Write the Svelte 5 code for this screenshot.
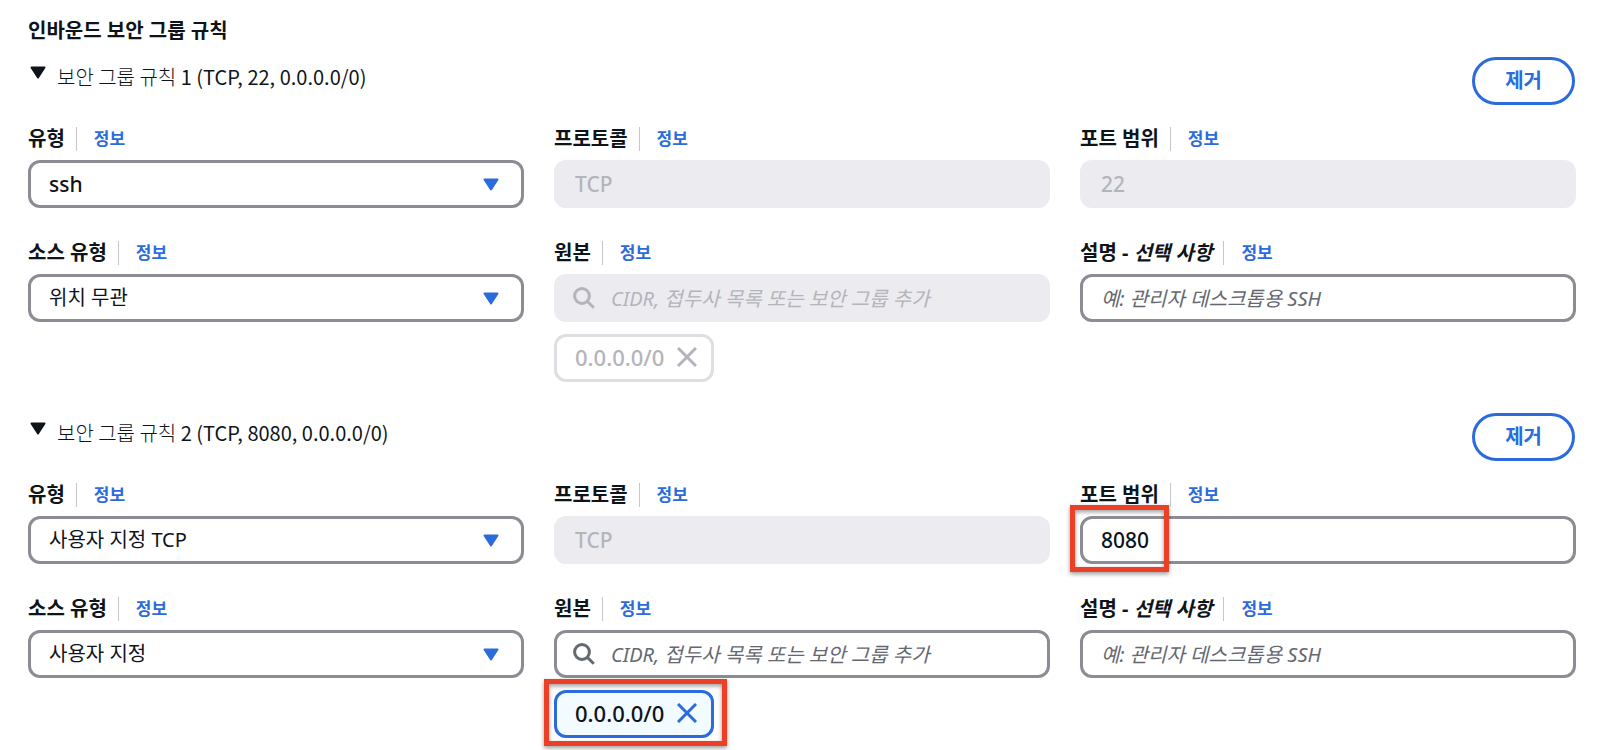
<script lang="ts">
  interface Rule {
    id: number;
    type: string;
    protocol: string;
    port: string;
    portLocked: boolean;
    sourceType: string;
    cidr: string;
    cidrLocked: boolean;
    description: string;
    highlight: boolean;
    open: boolean;
  }

  const types = ['ssh', '사용자 지정 TCP'];
  const sourceTypes = ['위치 무관', '사용자 지정'];

  let rules = $state<Rule[]>([
    {
      id: 1,
      type: 'ssh',
      protocol: 'TCP',
      port: '22',
      portLocked: true,
      sourceType: '위치 무관',
      cidr: '0.0.0.0/0',
      cidrLocked: true,
      description: '',
      highlight: false,
      open: true,
    },
    {
      id: 2,
      type: '사용자 지정 TCP',
      protocol: 'TCP',
      port: '8080',
      portLocked: false,
      sourceType: '사용자 지정',
      cidr: '0.0.0.0/0',
      cidrLocked: false,
      description: '',
      highlight: true,
      open: true,
    },
  ]);

  function remove(id: number) {
    rules = rules.filter((rule) => rule.id !== id);
  }
</script>

{#snippet caret()}
  <svg class="caret" viewBox="0 0 16 13" aria-hidden="true">
    <path d="M1.5 1.5h13L8 11.5z" fill="currentColor" stroke="currentColor" stroke-width="2" stroke-linejoin="round" />
  </svg>
{/snippet}

{#snippet label(id: string, text: string, optional = '')}
  <div class="label-row">
    <label for={id}>{text}{#if optional}{' '}- <em>{optional}</em>{/if}</label>
    <a class="info" href="#info">정보</a>
  </div>
{/snippet}

<main>
  <h2>인바운드 보안 그룹 규칙</h2>

  {#each rules as rule (rule.id)}
    <section class="rule">
      <header>
        <button class="toggle" type="button" aria-expanded={rule.open} onclick={() => (rule.open = !rule.open)}>
          {@render caret()}
          <span class="title">
            보안 그룹 규칙 <span class="summary">{rule.id} ({rule.protocol}, {rule.port}, {rule.cidr})</span>
          </span>
        </button>
        <button class="remove" type="button" onclick={() => remove(rule.id)}>제거</button>
      </header>

      {#if rule.open}
        <div class="fields">
          <div class="field">
            {@render label(`type-${rule.id}`, '유형')}
            <div class="control">
              <select id="type-{rule.id}" class:latin={rule.type === 'ssh'} bind:value={rule.type}>
                {#each types as type}
                  <option value={type}>{type}</option>
                {/each}
              </select>
              {@render caret()}
            </div>
          </div>

          <div class="field">
            {@render label(`protocol-${rule.id}`, '프로토콜')}
            <div class="control">
              <input id="protocol-{rule.id}" class="latin" type="text" value={rule.protocol} disabled />
            </div>
          </div>

          <div class="field">
            {@render label(`port-${rule.id}`, '포트 범위')}
            <div class="control">
              <input id="port-{rule.id}" class="latin" type="text" bind:value={rule.port} disabled={rule.portLocked} />
              {#if rule.highlight}
                <span class="highlight port-highlight"></span>
              {/if}
            </div>
          </div>

          <div class="field">
            {@render label(`source-type-${rule.id}`, '소스 유형')}
            <div class="control">
              <select id="source-type-{rule.id}" bind:value={rule.sourceType}>
                {#each sourceTypes as sourceType}
                  <option value={sourceType}>{sourceType}</option>
                {/each}
              </select>
              {@render caret()}
            </div>
          </div>

          <div class="field">
            {@render label(`source-${rule.id}`, '원본')}
            <div class="control" class:locked={rule.cidrLocked}>
              <svg class="search-icon" viewBox="0 0 22 22" aria-hidden="true">
                <circle cx="9" cy="9" r="7.4" fill="none" stroke="currentColor" stroke-width="3" />
                <path d="M14.2 14.2l6.6 6.6" stroke="currentColor" stroke-width="3" />
              </svg>
              <input
                id="source-{rule.id}"
                class="search"
                type="text"
                placeholder="CIDR, 접두사 목록 또는 보안 그룹 추가"
                disabled={rule.cidrLocked}
              />
            </div>
            <div class="chip" class:locked={rule.cidrLocked}>
              <span>{rule.cidr}</span>
              <button type="button" aria-label="{rule.cidr} 제거" disabled={rule.cidrLocked}>
                <svg viewBox="0 0 20 20" aria-hidden="true">
                  <path d="M1 1l18 18M19 1L1 19" fill="none" stroke="currentColor" stroke-width="3" />
                </svg>
              </button>
              {#if rule.highlight}
                <span class="highlight chip-highlight"></span>
              {/if}
            </div>
          </div>

          <div class="field">
            {@render label(`description-${rule.id}`, '설명', '선택 사항')}
            <div class="control">
              <input
                id="description-{rule.id}"
                type="text"
                placeholder="예: 관리자 데스크톱용 SSH"
                bind:value={rule.description}
              />
            </div>
          </div>
        </div>
      {/if}
    </section>
  {/each}
</main>

<style>
  :global(body) {
    margin: 0;
    background: #fff;
  }

  main {
    --text: #0f141a;
    --blue: #2b6bdb;
    --border: #8c8c94;
    --muted: #656871;
    --disabled: #b4b4bb;
    padding: 16px 26px 12px 28px;
    color: var(--text);
    font-family: 'Noto Sans', 'Noto Sans CJK KR', sans-serif;
    font-size: 20px;
    line-height: 30px;
  }

  button,
  input,
  select {
    box-sizing: border-box;
    margin: 0;
    font: inherit;
    color: inherit;
  }

  h2 {
    margin: 0 0 11px;
    font-size: 20px;
    font-weight: 700;
  }

  .rule + .rule {
    margin-top: 31px;
  }

  header {
    display: flex;
    align-items: flex-start;
    justify-content: space-between;
    margin-bottom: 19px;
    padding-right: 1px;
  }

  .toggle {
    display: flex;
    align-items: flex-start;
    gap: 11px;
    padding: 5px 0 0 2px;
    border: 0;
    background: none;
    cursor: pointer;
  }

  .toggle .caret {
    margin-top: 4px;
  }

  .title {
    font-family: 'Noto Sans CJK KR', sans-serif;
    font-weight: 300;
  }

  .summary {
    font-weight: 400;
  }

  .caret {
    width: 16px;
    height: 13px;
  }

  .remove {
    height: 48px;
    padding: 0 30px;
    border: 3px solid var(--blue);
    border-radius: 24px;
    background: #fff;
    color: var(--blue);
    font-weight: 700;
    cursor: pointer;
  }

  .fields {
    display: grid;
    grid-template-columns: repeat(3, minmax(0, 1fr));
    gap: 30px;
  }

  .label-row {
    display: flex;
    align-items: center;
    height: 30px;
    margin-bottom: 6px;
  }

  label {
    padding-right: 11px;
    font-weight: 700;
    white-space: nowrap;
  }

  .info {
    padding-left: 17px;
    border-left: 1px solid #c6c6cd;
    color: var(--blue);
    font-size: 17px;
    font-weight: 700;
    line-height: 24px;
    text-decoration: none;
  }

  .control {
    position: relative;
  }

  input,
  select {
    display: block;
    width: 100%;
    height: 48px;
    padding: 0 18px;
    border: 3px solid var(--border);
    border-radius: 12px;
    outline: none;
    background: #fff;
  }

  select {
    appearance: none;
  }

  .latin {
    font-size: 21px;
    font-weight: 500;
  }

  input:focus,
  select:focus {
    border-color: var(--blue);
  }

  input::placeholder {
    color: var(--muted);
    font-style: italic;
    opacity: 1;
  }

  input:disabled {
    border-color: #ebebf0;
    background: #ebebf0;
    color: var(--disabled);
  }

  input:disabled::placeholder {
    color: var(--disabled);
  }

  .control .caret {
    position: absolute;
    top: 18px;
    right: 25px;
    color: var(--blue);
    pointer-events: none;
  }

  .search {
    padding-left: 54px;
  }

  .search-icon {
    position: absolute;
    top: 13px;
    left: 19px;
    width: 22px;
    height: 22px;
    color: var(--muted);
    pointer-events: none;
  }

  .locked .search-icon {
    color: var(--disabled);
  }

  .chip {
    position: relative;
    box-sizing: border-box;
    display: flex;
    align-items: center;
    gap: 13px;
    width: fit-content;
    height: 48px;
    margin-top: 12px;
    padding: 0 14px 2px 18px;
    border: 3px solid var(--blue);
    border-radius: 12px;
    background: #f2fbff;
    font-size: 22px;
    font-weight: 500;
  }

  .chip.locked {
    border-color: #dedee3;
    background: #fff;
    color: var(--disabled);
  }

  .chip button {
    display: flex;
    padding: 0;
    border: 0;
    background: none;
    color: var(--blue);
  }

  .chip.locked button {
    color: var(--disabled);
  }

  .chip svg {
    width: 20px;
    height: 20px;
  }

  .highlight {
    position: absolute;
    box-sizing: border-box;
    border: 5px solid #eb4026;
    filter: drop-shadow(0 2px 2px rgb(0 0 0 / 40%));
    pointer-events: none;
  }

  .port-highlight {
    top: -11px;
    left: -10px;
    width: 99px;
    height: 67px;
  }

  .chip-highlight {
    inset: -14px -16px -11px -13px;
  }
</style>
